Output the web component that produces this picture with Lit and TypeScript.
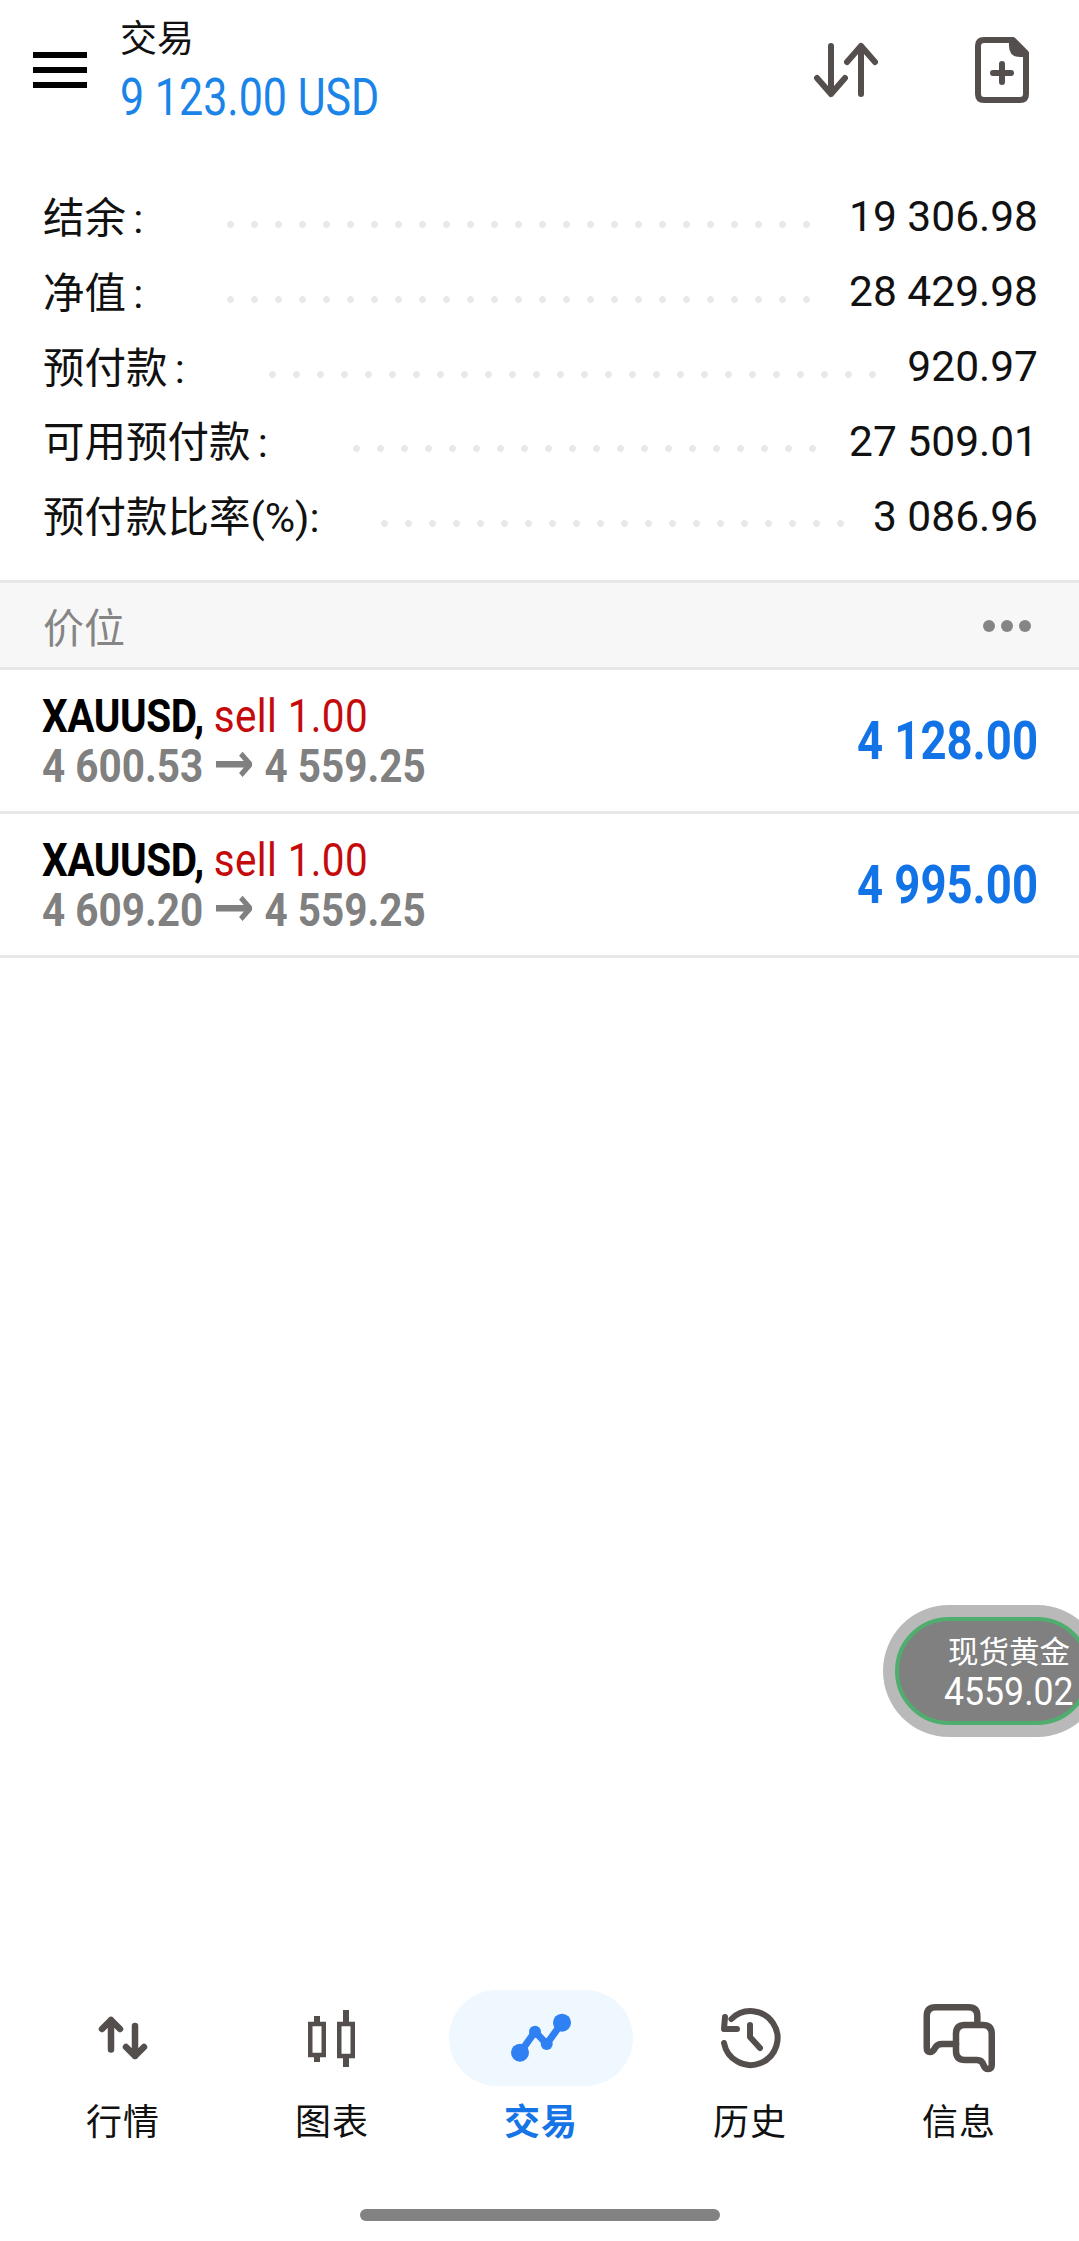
import { LitElement, html, css } from "lit";
import { customElement } from "lit/decorators.js";

const rows = [
  { label: "结余 :", value: "19 306.98", start: 227, dots: 25 },
  { label: "净值 :", value: "28 429.98", start: 227, dots: 25 },
  { label: "预付款 :", value: "920.97", start: 269, dots: 26 },
  { label: "可用预付款 :", value: "27 509.01", start: 353, dots: 20 },
  { label: "预付款比率(%):", value: "3 086.96", start: 381, dots: 20 },
];

const positions = [
  { open: "4 600.53", close: "4 559.25", profit: "4 128.00" },
  { open: "4 609.20", close: "4 559.25", profit: "4 995.00" },
];

@customElement("app-root")
export class AppRoot extends LitElement {
  static styles = css`
    :host { display: block; width: 1079px; height: 2241px; background: #fff; position: relative; overflow: hidden; font-family: "Roboto", "Noto Sans CJK SC", sans-serif; }
    * { box-sizing: border-box; }
    .top { height: 140px; display: flex; align-items: flex-start; position: relative; }
    .menu { width: 120px; flex: none; padding: 52px 0 0 33px; }
    .menu svg { display: block; }
    .titles { flex: 1; padding-top: 20px; }
    .t1 { font-size: 37px; line-height: 40px; color: #111; }
    .t2 { font-size: 51px; line-height: 56px; color: #1a84e8; transform: scaleX(0.843); transform-origin: left center; white-space: nowrap; margin-top: 10px; }
    .actions { display: flex; align-items: flex-start; padding-top: 34px; margin-right: 47px; gap: 92px; }
    .actions svg { display: block; }
    .actions svg:first-child { margin-top: 6px; }
    .stats { padding: 40.6px 41px 0 43px; height: 441px; margin-top: -1px; }
    .row { height: 74.8px; display: flex; align-items: center; color: #111; position: relative; }
    .row .lab { white-space: nowrap; font-size: 41.5px; word-spacing: -3px; margin-bottom: 4px; }
    .row .val { font-size: 42.5px; margin-left: auto; white-space: nowrap; }
    .dots { position: absolute; top: 41.4px; height: 8px; background-image: radial-gradient(circle at 3.5px 3.5px, #e9e9e9 3.2px, transparent 3.7px); background-size: 24px 8px; background-repeat: repeat-x; }
    .head { height: 90px; background: #f7f7f7; border-top: 3px solid #e8e8e8; border-bottom: 3px solid #e8e8e8; display: flex; align-items: center; padding: 0 43px; font-size: 41px; color: #858585; position: relative; }
    .more { margin-left: auto; display: flex; gap: 6px; margin-right: 5px; margin-top: 2px; }
    .more i { width: 12px; height: 12px; border-radius: 50%; background: #858585; display: block; }
    .pos { height: 144px; border-bottom: 3px solid #e8e8e8; display: flex; align-items: center; padding: 0 41px 0 42px; }
    .left { flex: 1; }
    .l1, .l2 { transform: scaleX(0.88); transform-origin: left center; white-space: nowrap; font-size: 46px; }
    .l1 { line-height: 51px; }
    .l2 { line-height: 48px; height: 48px; font-weight: 700; color: #808080; }
    .arrow { font-family: "DejaVu Sans", sans-serif; font-size: 56px; line-height: 0; }
    .sym { font-weight: 700; color: #000; letter-spacing: -0.5px; }
    .side { color: #c40a0a; letter-spacing: 0.4px; }
    .profit { font-size: 53px; font-weight: 700; color: #1273e6; transform: scaleX(0.858); transform-origin: right center; white-space: nowrap; }
    .float { position: absolute; left: 883px; top: 1605px; width: 220px; height: 132px; border-radius: 66px; background: #b9b9b9; padding: 12px; }
    .float .in { height: 108px; border-radius: 54px; background: #808080; border: 4.5px solid #4fae6e; color: #fff; padding-left: 49px; }
    .float .a { font-size: 30.5px; line-height: 36px; padding-top: 14px; white-space: nowrap; }
    .float .b { font-size: 38px; line-height: 40px; white-space: nowrap; transform: scaleX(0.938); transform-origin: left center; margin-left: -4px; padding-top: 1px; }
    .nav { position: absolute; left: 0; right: 0; top: 1990px; display: grid; grid-template-columns: repeat(5, 209px); padding-left: 18.5px; }
    .tab { display: flex; flex-direction: column; align-items: center; font-size: 36px; color: #111; }
    .ico { width: 184px; height: 96px; border-radius: 48px; display: flex; align-items: center; justify-content: center; }
    .ico svg { flex: none; overflow: visible; }
    .tab.on .ico { background: #eff7ff; }
    .tab.on { color: #1574e6; font-weight: 700; }
    .tab span { margin-top: 15px; line-height: 44px; letter-spacing: 1px; }
    .home { position: absolute; left: 360px; top: 2209px; width: 360px; height: 12px; border-radius: 6px; background: #828282; }
  `;

  render() {
    return html`
      <div class="top">
        <div class="menu">
          <svg width="54" height="40" viewBox="0 0 54 40"><path d="M0 3H54M0 18H54M0 33H54" stroke="#000" stroke-width="6"/></svg>
        </div>
        <div class="titles">
          <div class="t1">交易</div>
          <div class="t2">9 123.00 USD</div>
        </div>
        <div class="actions">
          <svg width="70" height="60" viewBox="0 0 70 60" fill="none" stroke="#544f4d" stroke-width="6" stroke-linecap="round" stroke-linejoin="round">
            <path d="M21 6V54M7 38L21 54L35 38M51 54V6M37 22L51 6L65 22"/>
          </svg>
          <svg width="60" height="72" viewBox="0 0 60 72" fill="none" stroke="#544f4d" stroke-width="6" stroke-linejoin="round" stroke-linecap="round">
            <path d="M12 6H41L54 19V60Q54 66 48 66H12Q6 66 6 60V12Q6 6 12 6Z"/>
            <path d="M38 6V12Q38 22 48 22H54L41 6Z" fill="#544f4d" stroke-width="2"/>
            <path d="M30 30V48M21 39H39"/>
          </svg>
        </div>
      </div>
      <div class="stats">
        ${rows.map(
          (r) => html`<div class="row">
            <span class="lab">${r.label}</span>
            <span class="dots" style="left:${r.start - 43}px;width:${(r.dots - 1) * 24 + 8}px"></span>
            <span class="val">${r.value}</span>
          </div>`
        )}
      </div>
      <div class="head">价位<div class="more"><i></i><i></i><i></i></div></div>
      ${positions.map(
        (p) => html`<div class="pos">
          <div class="left">
            <div class="l1"><span class="sym">XAUUSD,</span> <span class="side">sell 1.00</span></div>
            <div class="l2">${p.open} <span class="arrow">→</span> ${p.close}</div>
          </div>
          <div class="profit">${p.profit}</div>
        </div>`
      )}
      <div class="float">
        <div class="in">
          <div class="a">现货黄金</div>
          <div class="b">4559.02</div>
        </div>
      </div>
      <div class="nav">
        <div class="tab">
          <div class="ico">
            <svg width="64" height="64" viewBox="0 0 64 64" fill="none" stroke="#544f4d" stroke-width="6.5" stroke-linecap="round" stroke-linejoin="round">
              <path d="M20 43.5V14M11 23L20 14L29 23"/><path d="M44 20V50M35 41L44 50L53 41"/>
            </svg>
          </div>
          <span>行情</span>
        </div>
        <div class="tab">
          <div class="ico">
            <svg width="64" height="64" viewBox="0 0 64 64" fill="none" stroke="#544f4d" stroke-width="4.5">
              <rect x="10.25" y="18" width="13.5" height="31"/><path d="M17 10V18M17 49V56" stroke-width="6"/>
              <rect x="39.25" y="18" width="13.5" height="32"/><path d="M46 4V18M46 50V61" stroke-width="6"/>
            </svg>
          </div>
          <span>图表</span>
        </div>
        <div class="tab on">
          <div class="ico">
            <svg width="64" height="64" viewBox="0 0 64 64" fill="#2f80f2" stroke="#2f80f2">
              <path d="M11 46.7L26 25.7L37.7 38L53 16.7" fill="none" stroke-width="7"/>
              <circle cx="11" cy="46.7" r="9" stroke="none"/><circle cx="26" cy="25.7" r="6" stroke="none"/><circle cx="37.7" cy="38" r="6" stroke="none"/><circle cx="53" cy="16.7" r="9" stroke="none"/>
            </svg>
          </div>
          <span>交易</span>
        </div>
        <div class="tab">
          <div class="ico">
            <svg width="64" height="64" viewBox="0 0 64 64" fill="none" stroke="#544f4d" stroke-width="6" stroke-linecap="round" stroke-linejoin="round">
              <path d="M13.4 13A27 27 0 1 1 6 37"/><path d="M7 11L6 23H19"/><path d="M32 19V31L42 42"/>
            </svg>
          </div>
          <span>历史</span>
        </div>
        <div class="tab">
          <div class="ico">
            <svg width="80" height="80" viewBox="0 0 80 80" fill="none" stroke="#544f4d" stroke-width="6.5" stroke-linecap="round" stroke-linejoin="round">
              <path d="M58.35 24V18Q58.35 9.25 49.6 9.25H16.5Q7.75 9.25 7.75 18V50Q7.75 54 11 54Q14 54 16 50Q18 46 23 46H37"/>
              <path d="M46 27H63.75Q72.75 27 72.75 36V67Q72.75 71 69 71Q66 71 64.5 67Q63 62 58 62H46Q37 62 37 53V36Q37 27 46 27Z"/>
            </svg>
          </div>
          <span>信息</span>
        </div>
      </div>
      <div class="home"></div>
    `;
  }
}
